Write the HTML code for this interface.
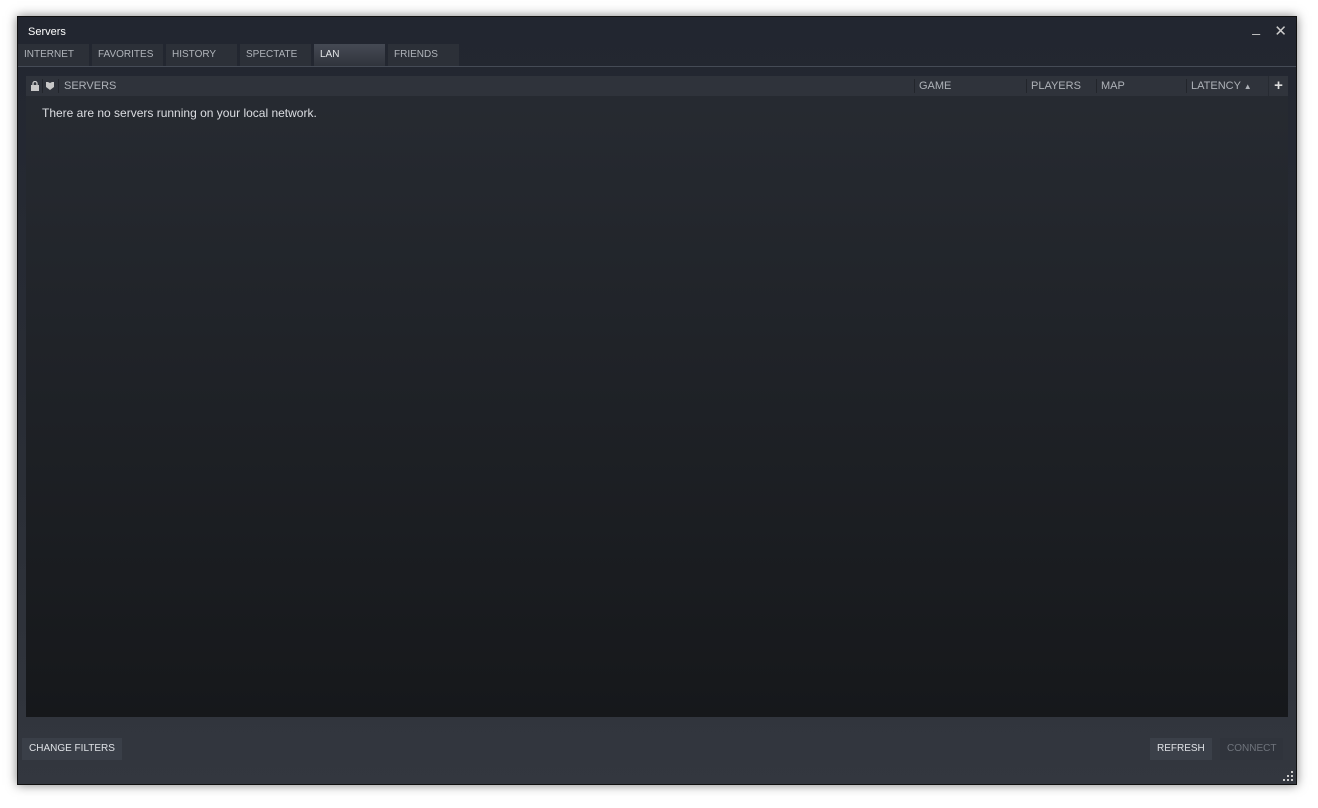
<!DOCTYPE html>
<html><head><style>
body{margin:0;width:1318px;height:808px;background:#fff;position:relative;overflow:hidden;font-family:"Liberation Sans",Arial,sans-serif;}
.win{position:absolute;left:17px;top:16px;width:1280px;height:769px;background:linear-gradient(#222630,#2a2e36 60%,#33373f);box-shadow:0 0 10px rgba(0,0,0,.5);border:1px solid #111;box-sizing:border-box}
.t{position:absolute;font-size:11px;color:#b8bcc2}
.title{left:10px;top:9px;color:#fff;font-size:11px}
.tab{position:absolute;top:27px;height:22px;width:71px;background:#2c3038;color:#b0b4ba;font-size:10px;line-height:22px;padding-left:6px;box-sizing:border-box}
.tab.a{background:linear-gradient(#454a54,#30343c);color:#e4e6e8}
.line{position:absolute;left:0;right:0;top:49px;height:1px;background:#454b56}
.list{position:absolute;left:8px;top:59px;width:1262px;height:641px;background:linear-gradient(#272b32,#16181b)}
.hdr{position:absolute;left:0;top:0;width:1242px;height:20px;background:#2f333b}
.h{position:absolute;top:4px;font-size:11px;color:#aeb2b8}
.sep{position:absolute;top:3px;width:1px;height:14px;background:#22252b}
.btn{position:absolute;top:721px;height:22px;line-height:22px;font-size:10px;padding:0 7px;background:#3a3f48;color:#dfe2e6}
</style></head><body>
<div class="win">
<div class="t title">Servers</div>
<div class="t" style="right:36px;top:2px;color:#ccc;font-size:14px">_</div>
<div class="t" style="right:9px;top:5px;color:#ccc;font-size:15px">✕</div>
<div class="tab" style="left:0">INTERNET</div>
<div class="tab" style="left:74px">FAVORITES</div>
<div class="tab" style="left:148px">HISTORY</div>
<div class="tab" style="left:222px">SPECTATE</div>
<div class="tab a" style="left:296px">LAN</div>
<div class="tab" style="left:370px">FRIENDS</div>
<div class="line"></div>
<div class="list">
<div class="hdr">
<svg style="position:absolute;left:5px;top:5px" width="8" height="10"><rect x="0" y="4" width="8" height="6" fill="#c8c8c8"/><path d="M2 4V2.5a2 2 0 0 1 4 0V4" stroke="#c8c8c8" fill="none" stroke-width="1.3"/></svg>
<div class="sep" style="left:16px"></div>
<svg style="position:absolute;left:20px;top:5px" width="8" height="10"><path d="M0 1h2l2 1 2-1h2v5l-4 3-4-3z" fill="#c8c8c8"/></svg>
<div class="sep" style="left:32px"></div>
<div class="h" style="left:38px">SERVERS</div>
<div class="sep" style="left:888px"></div><div class="h" style="left:893px">GAME</div>
<div class="sep" style="left:1000px"></div><div class="h" style="left:1005px">PLAYERS</div>
<div class="sep" style="left:1070px"></div><div class="h" style="left:1075px">MAP</div>
<div class="sep" style="left:1160px"></div><div class="h" style="left:1165px">LATENCY <span style="font-size:8px">▲</span></div>
</div>
<div style="position:absolute;left:1243px;top:0;width:19px;height:20px;background:#30343c;color:#ddd;font-size:15px;font-weight:bold;text-align:center;line-height:20px">+</div>
<div class="t" style="left:16px;top:30px;font-size:12px;color:#dcdee2">There are no servers running on your local network.</div>
</div>
<div class="btn" style="left:4px">CHANGE FILTERS</div>
<div class="btn" style="left:1132px;background:#3b4049">REFRESH</div>
<div class="btn" style="left:1202px;background:#30343c;color:#6f747c">CONNECT</div>
<svg style="position:absolute;right:3px;bottom:3px" width="10" height="10"><g fill="#ccc"><rect x="8" y="0" width="2" height="2"/><rect x="4" y="4" width="2" height="2"/><rect x="8" y="4" width="2" height="2"/><rect x="0" y="8" width="2" height="2"/><rect x="4" y="8" width="2" height="2"/><rect x="8" y="8" width="2" height="2"/></g></svg>
</div>
</body></html>
